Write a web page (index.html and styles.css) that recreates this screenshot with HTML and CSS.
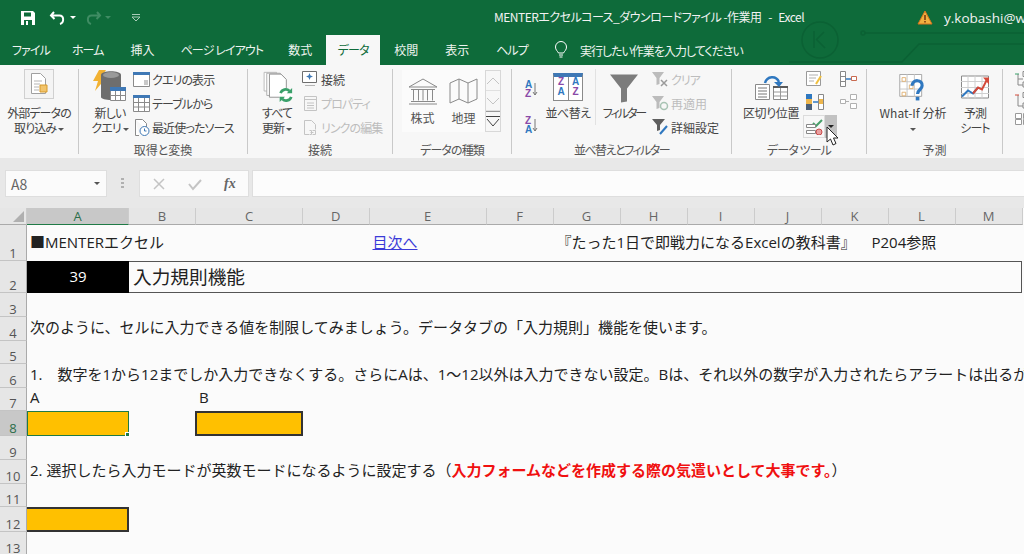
FILE: index.html
```html
<!DOCTYPE html>
<html lang="ja">
<head>
<meta charset="utf-8">
<title>MENTERエクセルコース</title>
<link rel="stylesheet" href="styles.css">
</head>
<body>
<div class="app">

  <header class="titlebar">
    <svg class="circuit" width="300" height="65" viewBox="0 0 300 65" fill="none" stroke="#0b6134" stroke-width="1.5">
      <circle cx="96" cy="40" r="18"/><path d="M90 31v17M92 40l8-8M93 40l8 8"/>
      <path d="M65 62h113l17-18h105M141 33h159"/><circle cx="139" cy="33" r="2"/>
    </svg>
    <div class="qat">
      <svg width="16" height="16" viewBox="0 0 16 16"><path fill="#fff" d="M1 1h12l2 2v12H1z"/><path fill="#0e6b3a" d="M4 2.500h7v4H4zM4 10h8v5H4z"/><path fill="#fff" d="M6 11h2v4H6z"/></svg>
      <svg class="undo" width="18" height="16" viewBox="0 0 18 16" fill="none" stroke="#fff" stroke-width="2"><path d="M5 2L2 5.500 5.500 9M2.500 5.500h8c4.500 0 5 7 .5 8.500"/></svg>
      <span class="caret white"></span>
      <svg class="redo" width="18" height="16" viewBox="0 0 18 16" fill="none" stroke="#3f8c63" stroke-width="2"><path d="M13 2l3 3.500L12.500 9M15.500 5.500h-8c-4.500 0-5 7-.5 8.500"/></svg>
      <span class="caret dim"></span>
      <svg class="customize" width="12" height="10" viewBox="0 0 12 10" fill="none" stroke="#a8cdb8"><path d="M2 1.500h8M2 4l4 4 4-4z"/></svg>
    </div>
    <div class="doc-title">MENTERエクセルコース_ダウンロードファイル -作業用 &nbsp; - &nbsp; Excel</div>
    <div class="account">
      <svg width="16" height="15" viewBox="0 0 16 15"><path fill="#f0b040" stroke="#d9731c" d="M8 1l7 13H1z"/><path fill="#7a3b10" d="M7.200 5h1.600v5H7.200zM7.200 11h1.600v1.600H7.200z"/></svg>
      <span>y.kobashi@wh</span>
    </div>
  </header>

  <nav class="tabs">
    <span class="tab kana tab-file">ファイル</span>
    <span class="tab kana tab-home">ホーム</span>
    <span class="tab tab-insert">挿入</span>
    <span class="tab kana tab-layout">ページ レイアウト</span>
    <span class="tab tab-formula">数式</span>
    <span class="tab kana tab-data active">データ</span>
    <span class="tab tab-review">校閲</span>
    <span class="tab tab-view">表示</span>
    <span class="tab kana tab-help">ヘルプ</span>
    <svg class="bulb" width="14" height="18" viewBox="0 0 14 18" fill="none" stroke="#fff"><path d="M4.500 12C3.500 10 1.500 9 1.500 6a5.500 5.500 0 0 1 11 0c0 3-2 4-3 6zM5 14h4M5.500 16h3"/></svg>
    <span class="tell-me">実行したい作業を入力してください</span>
  </nav>

  <section class="ribbon">

    <div class="group g-external">
      <div class="group-body">
        <div class="big">
          <div class="big-framed">
            <svg width="20" height="24" viewBox="0 0 20 24"><path fill="#fff" stroke="#a0a0a0" d="M2.500 1.500h9l5 5v15h-14z"/><path stroke="#b5b5b5" d="M5 9h8M5 12h6M5 15h5M5 18h5"/><path fill="#f2c46b" stroke="#d69a2d" d="M11 13h7v7h-7z"/></svg>
          </div>
          <span class="big-text">外部データの<br>取り込み <i class="caret"></i></span>
        </div>
      </div>
      <div class="group-label"></div>
    </div>

    <div class="group g-get">
      <div class="group-body">
        <div class="big">
          <svg class="big-icon" width="36" height="36" viewBox="0 0 36 36">
            <path fill="#f2b233" d="M7 1h7L9 9h5L3 22l3-10H1z"/>
            <path fill="#6e6e6e" d="M9 6c0-5 20-5 20 0v22c0 4-20 4-20 0z"/><ellipse cx="19" cy="6" rx="8" ry="3" fill="#9a9a9a"/>
            <path fill="#fff" stroke="#8a8a8a" d="M18.500 18.500h15v13h-15z"/><path fill="#3f78b5" d="M18 18h16v4H18z"/><path stroke="#8a8a8a" d="M23.500 22v9M28.500 22v9M19 26.500h14"/>
          </svg>
          <span class="big-text">新しい<br>クエリ <i class="caret"></i></span>
        </div>
        <div class="small-list">
          <div class="small-btn"><svg width="17" height="15" viewBox="0 0 17 15"><path fill="#fff" stroke="#8a8a8a" d="M.5.5h16v14H.500z"/><path fill="#3f78b5" d="M0 0h17v3H0z"/><path fill="#c8c8c8" d="M11 8h4v5h-4z"/></svg>クエリの表示</div>
          <div class="small-btn"><svg width="17" height="17" viewBox="0 0 17 17"><path fill="#fff" stroke="#8a8a8a" d="M.5.5h16v16H.500z"/><path fill="#3f78b5" d="M0 0h17v3H0z"/><path stroke="#8a8a8a" d="M5.500 3v14M11.500 3v14M0 7.500h17M0 12h17"/></svg>テーブルから</div>
          <div class="small-btn"><svg width="17" height="17" viewBox="0 0 17 17"><path fill="#fff" stroke="#8a8a8a" d="M2.500.5h7l4 4v6M6 16.500H2.500V.500"/><circle cx="11.500" cy="12" r="4.500" fill="#fff" stroke="#3f78b5"/><path stroke="#3f78b5" fill="none" d="M11.500 9.500V12h2"/></svg>最近使ったソース</div>
        </div>
      </div>
      <div class="group-label flat">取得と変換</div>
    </div>

    <div class="group g-conn">
      <div class="group-body">
        <div class="big">
          <svg class="big-icon" width="32" height="36" viewBox="0 0 36 36">
            <path fill="#fff" stroke="#b5b5b5" d="M3.500 1.500h14v21h-14z"/><path fill="#fff" stroke="#a5a5a5" d="M6.500 2.500h15l6 6v19h-21z"/><path fill="#fff" stroke="#8a8a8a" d="M9.500 3.500h13l6 6v20h-19z"/>
            <circle cx="28" cy="27" r="7.500" fill="#fff"/><path fill="none" stroke="#3aa06a" stroke-width="3" d="M22 25a6 6 0 0 1 10-2.500M34 29a6 6 0 0 1-10 2.500"/><path fill="#3aa06a" d="M29 25h6v-6zM27 29h-6v6z"/>
          </svg>
          <span class="big-text">すべて<br>更新 <i class="caret"></i></span>
        </div>
        <div class="small-list">
          <div class="small-btn flat"><svg width="17" height="16" viewBox="0 0 17 16"><path fill="#fff" stroke="#6e6e6e" d="M.5.5h14v11H.500z"/><path fill="#3f78b5" d="M7.500 2l1 2.500 2.500 1-2.500 1-1 2.500-1-2.500-2.500-1 2.500-1z"/><path stroke="#b5b5b5" d="M3 14.500h10"/></svg>接続</div>
          <div class="small-btn off"><svg width="17" height="17" viewBox="0 0 17 17" fill="none" stroke="#c4c4c4"><path d="M2.500 1.500h12v14h-12zM2.500 4.500h12M5 8h7M5 10.500h7M5 13h7"/></svg>プロパティ</div>
          <div class="small-btn off"><svg width="17" height="17" viewBox="0 0 17 17" fill="none" stroke="#c4c4c4"><path d="M7 15.500H2.500v-14h7l4 4v5M8.500 13.500h3M7.500 11.500h2v4h-2M10.500 11.500h3v4h-3"/></svg>リンクの編集</div>
        </div>
      </div>
      <div class="group-label flat">接続</div>
    </div>

    <div class="group g-types">
      <div class="group-body">
        <div class="gallery">
          <div class="gallery-item">
            <svg width="30" height="27" viewBox="0 0 30 27" fill="none" stroke="#8a8a8a"><path d="M1 9L15 1l14 8zM3 11.500h24M5.500 11.500v11M10.500 11.500v11M15 11.500v11M19.500 11.500v11M24.500 11.500v11M3 23.500h24M1 26h28"/></svg>
            <span>株式</span>
          </div>
          <div class="gallery-item">
            <svg width="30" height="27" viewBox="0 0 30 27" fill="none" stroke="#8a8a8a"><path d="M1 5l9-4 9 4 9-4v20l-9 4-9-4-9 4zM10 1v20M19 5v20"/></svg>
            <span>地理</span>
          </div>
        </div>
        <div class="gallery-scroll">
          <span class="scroll-btn"><svg width="14" height="8" viewBox="0 0 14 8" fill="none" stroke="#c4c4c4"><path d="M1 7l6-6 6 6"/></svg></span>
          <span class="scroll-btn"><svg width="14" height="8" viewBox="0 0 14 8" fill="none" stroke="#c4c4c4"><path d="M1 1l6 6 6-6"/></svg></span>
          <span class="scroll-btn more"><svg width="14" height="11" viewBox="0 0 14 11" fill="none" stroke="#444"><path d="M0 .500h14M1 3l6 7 6-7"/></svg></span>
        </div>
      </div>
      <div class="group-label">データの種類</div>
    </div>

    <div class="group g-sort">
      <div class="group-body">
        <div class="sort-col">
          <div class="sort-btn"><span class="az"><b class="blue">A</b><b class="purple">Z</b></span><svg width="6" height="14" viewBox="0 0 6 14" fill="none" stroke="#777"><path d="M3 1v12M1 10l2 3 2-3"/></svg></div>
          <div class="sort-btn"><span class="az"><b class="purple">Z</b><b class="blue">A</b></span><svg width="6" height="14" viewBox="0 0 6 14" fill="none" stroke="#777"><path d="M3 1v12M1 10l2 3 2-3"/></svg></div>
        </div>
        <div class="big b-sort">
          <div class="sort-card">
            <span class="az-cell"><b class="purple">Z</b><b class="blue">A</b></span>
            <span class="az-cell"><b class="blue">A</b><b class="purple">Z</b></span>
          </div>
          <span class="big-text">並べ替え</span>
        </div>
        <div class="big b-filter">
          <svg class="big-icon" width="30" height="30" viewBox="0 0 30 30"><path fill="#7c7c7c" d="M1 1h28L18 15v13l-6 1V15z"/></svg>
          <span class="big-text">フィルター</span>
        </div>
        <div class="small-list">
          <div class="small-btn off"><svg width="17" height="16" viewBox="0 0 17 16"><path fill="#bcbcbc" d="M0 1h12L7.500 7v6l-3 1V7z"/><path stroke="#9a9a9a" stroke-width="1.500" d="M9 9l6 6M15 9l-6 6"/></svg>クリア</div>
          <div class="small-btn off flat"><svg width="17" height="16" viewBox="0 0 17 16"><path fill="#bcbcbc" d="M0 1h12L7.500 7v6l-3 1V7z"/><circle cx="12" cy="11" r="3.500" fill="none" stroke="#a8c4b4" stroke-width="1.500"/></svg>再適用</div>
          <div class="small-btn flat"><svg width="17" height="18" viewBox="0 0 17 18"><path fill="#5e5e5e" d="M0 1h13L8 7v5l-3 1V7z"/><path stroke="#2f78c0" stroke-width="2" d="M8 16l7-8"/></svg>詳細設定</div>
        </div>
      </div>
      <div class="group-label tight">並べ替えとフィルター</div>
    </div>

    <div class="group g-tools">
      <div class="group-body">
        <div class="big b-split">
          <svg class="big-icon" width="34" height="30" viewBox="0 0 34 30">
            <path fill="#fff" stroke="#8a8a8a" d="M1.500 10.500h14v15h-14z"/><path stroke="#777" d="M4 14h9M4 17h9M4 20h9M4 23h9"/>
            <path fill="#fff" stroke="#8a8a8a" d="M19.500 12.500h14v13h-14z"/><path fill="#5a5a5a" d="M19 12h15v2H19z"/><path stroke="#999" d="M26.500 14v11M20 18h13M20 22h13"/>
            <path fill="none" stroke="#2f78c0" stroke-width="2.500" d="M11 9c2-7 11-8 14-1"/><path fill="#2f78c0" d="M20 8h9l-4 5z"/>
          </svg>
          <span class="big-text">区切り位置</span>
        </div>
        <div class="tool-col">
          <svg width="17" height="16" viewBox="0 0 17 16"><path fill="#fff" stroke="#9a9a9a" d="M.5.5h14v14H.500z"/><path stroke="#b0b0b0" d="M3 4h9M3 7h7M3 10h5"/><path stroke="#f0c040" stroke-width="2" d="M10 13l5-8"/></svg>
          <svg width="18" height="16" viewBox="0 0 18 16"><path fill="#2f78c0" d="M0 0h6v5H0z"/><path fill="#eeb64c" d="M0 5h6v5H0z"/><path fill="#4a5f78" d="M0 10h6v6H0z"/><path fill="#fff" stroke="#888" d="M12.500.5h5v15h-5z"/><path fill="#eeb64c" d="M13 5h4v5h-4z"/><path stroke="#2f78c0" stroke-width="1.500" d="M7 8h5"/></svg>
          <div class="validation">
            <span class="validation-main"><svg width="18" height="16" viewBox="0 0 18 16"><path fill="none" stroke="#48a06a" stroke-width="2" d="M8 4l3 3 6-6"/><path fill="#fff" stroke="#888" d="M1.500 5.500h9v3h-9zM1.500 11.500h9v3h-9z"/><circle cx="14" cy="13" r="3" fill="#e8a0a0" stroke="#c84a4a"/></svg></span>
            <span class="validation-drop"><i class="caret"></i></span>
          </div>
        </div>
        <div class="tool-col">
          <svg width="17" height="16" viewBox="0 0 17 16"><path fill="#fff" stroke="#888" d="M.5.5h5v15h-5z"/><path stroke="#888" d="M0 5.500h6M0 10.500h6"/><path stroke="#2f78c0" stroke-width="1.500" d="M6 8h5"/><path fill="#fff" stroke="#c86a50" d="M11.500 5.500h5v4h-5z"/></svg>
          <svg width="17" height="16" viewBox="0 0 17 16" fill="#fff" stroke="#b0b0b0"><path d="M.5 5.500h5v4h-5zM10.500.5h6v5h-6zM10.500 9.500h6v5h-6zM6 7.500h3"/></svg>
        </div>
      </div>
      <div class="group-label">データ ツール</div>
    </div>

    <div class="group g-forecast">
      <div class="group-body">
        <div class="big b-whatif">
          <svg class="big-icon" width="30" height="34" viewBox="0 0 30 34">
            <path fill="#fff" stroke="#a0a0a0" d="M.5.5h24v24H.500z"/><path stroke="#c4c4c4" d="M8.500 0v25M16.500 0v25M0 8.500h25M0 16.500h25"/>
            <path fill="none" stroke="#e0b070" d="M3 4h4v4H3zM11 12h4v4h-4zM3 20h4v4H3z"/>
            <path fill="none" stroke="#2f78c0" stroke-width="3.500" d="M14 13c0-8 12-7 11 0 0 4-5 4-5 9"/><path fill="#2f78c0" d="M18 25h4v4h-4z"/>
          </svg>
          <span class="big-text flat">What-If 分析<br><i class="caret"></i></span>
        </div>
        <div class="big b-forecast">
          <svg class="big-icon" width="28" height="27" viewBox="0 0 28 27">
            <path fill="#fff" stroke="#8a8a8a" d="M.5.5h27v22H.500z"/><path stroke="#d0d0d0" d="M7 0v23M14 0v23M21 0v23M0 6h28M0 12h28M0 18h28"/>
            <path fill="none" stroke="#2f78c0" stroke-width="2" d="M1 21l6-6 5 3 5-6"/><path fill="none" stroke="#d44a3a" stroke-width="2" d="M12 18l5-6 4 2 5-10"/><path fill="#d44a3a" d="M22 2h6v7z"/>
          </svg>
          <span class="big-text">予測<br>シート</span>
        </div>
      </div>
      <div class="group-label flat">予測</div>
    </div>

    <div class="group g-outline">
      <div class="tool-col">
        <svg width="17" height="17" viewBox="0 0 17 17" fill="none" stroke="#888"><path d="M3 3v11h5M3 8h5M8 .5h6v5H8zM8 11h6v5H8z"/><path stroke="#3aa06a" d="M0 3h4"/></svg>
        <svg width="17" height="17" viewBox="0 0 17 17" fill="none" stroke="#888"><path d="M3 3v11h5M8 .5h6v5H8zM8 11h6v5H8z"/><path stroke="#d44a3a" d="M0 3h4"/></svg>
        <svg width="17" height="17" viewBox="0 0 17 17" fill="#fff" stroke="#999"><path d="M.5.5h6v5h-6zM8.500.5h6v5h-6zM.5 6.500h6v5h-6zM8.500 6.500h6v5h-6z"/></svg>
      </div>
    </div>

    <svg class="cursor" width="14" height="22" viewBox="0 0 14 22"><path fill="#fff" stroke="#222" d="M1 1v15l3.500-3 2.500 6 3-1.500-2.500-5.500H12z"/></svg>
  </section>

  <div class="formula-bar">
    <div class="name-box">A8<i class="caret"></i></div>
    <span class="grip"></span>
    <div class="fx-box">
      <svg width="14" height="14" viewBox="0 0 14 14" fill="none" stroke="#c4c4c4" stroke-width="1.500"><path d="M2 2l10 10M12 2L2 12"/></svg>
      <svg width="14" height="14" viewBox="0 0 14 14" fill="none" stroke="#c4c4c4" stroke-width="2"><path d="M1 7l4 5 8-9"/></svg>
      <span class="fx">fx</span>
    </div>
    <div class="formula-input"></div>
  </div>

  <main class="sheet">
    <div class="corner"><span class="corner-mark"></span></div>
    <div class="col-head on">A</div><div class="col-head">B</div><div class="col-head">C</div><div class="col-head">D</div><div class="col-head">E</div><div class="col-head">F</div><div class="col-head">G</div><div class="col-head">H</div><div class="col-head">I</div><div class="col-head">J</div><div class="col-head">K</div><div class="col-head">L</div><div class="col-head">M</div>

    <div class="row-head r1">1</div><div class="row-head r2">2</div><div class="row-head r3">3</div><div class="row-head r4">4</div><div class="row-head r5">5</div><div class="row-head r6">6</div><div class="row-head r7">7</div><div class="row-head on r8">8</div><div class="row-head r9">9</div><div class="row-head r10">10</div><div class="row-head r11">11</div><div class="row-head r12">12</div><div class="row-head r13">13</div>

    <div class="cell r1 ca">■MENTERエクセル</div>
    <div class="cell r1 ce"><a class="link">目次へ</a></div>
    <div class="cell r1 cg">『たった1日で即戦力になるExcelの教科書』</div>
    <div class="cell r1 ck">P204参照</div>

    <div class="cell r2 ca num-cell">39</div>
    <div class="cell r2 title-cell">入力規則機能</div>

    <div class="cell r4 ca">次のように、セルに入力できる値を制限してみましょう。データタブの「入力規則」機能を使います。</div>
    <div class="cell r6 ca">1.　数字を1から12までしか入力できなくする。さらにAは、1～12以外は入力できない設定。Bは、それ以外の数字が入力されたらアラートは出るが</div>
    <div class="cell r7 ca">A</div>
    <div class="cell r7 cc">B</div>
    <div class="cell r8 ca fill selected"><span class="fill-handle"></span></div>
    <div class="cell r8 cc fill"></div>
    <div class="cell r10 ca">2. 選択したら入力モードが英数モードになるように設定する（<strong class="warn">入力フォームなどを作成する際の気遣いとして大事です。</strong>）</div>
    <div class="cell r12 ca fill no-left"></div>
  </main>
</div>
</body>
</html>
```

FILE: styles.css
```css
* {
    box-sizing: border-box;
}

html, body {
    margin: 0;
    padding: 0;
    overflow: hidden;
}

body {
    font-family: "Noto Sans CJK JP", "Noto Sans", sans-serif;
    color: #333;
}

.app {
    width: 1024px;
    height: 554px;
    overflow: hidden;
    background: #e8e8e8;
}

/* title bar */
.titlebar {
    position: relative;
    z-index: 1;
    height: 35px;
    background: #0e6b3a;
    color: #f2f2f2;
    display: flex;
    align-items: center;
    font-size: 12px;
    font-feature-settings: "palt";
}

.circuit {
    position: absolute;
    left: 724px;
    top: 0;
}

.qat {
    display: flex;
    align-items: center;
    flex: none;
    width: 494px;
    padding-left: 20px;
}

.qat .undo { margin-left: 13px; }
.qat .caret { margin-left: 3px; }
.qat .redo { margin-left: 8px; }
.qat .customize { margin-left: 19px; }

.doc-title {
    position: relative;
    top: -1px;
    flex: none;
    width: 423px;
    white-space: nowrap;
    letter-spacing: -.5px;
}

.account {
    position: relative;
    display: flex;
    align-items: center;
    flex: none;
    gap: 11px;
    white-space: nowrap;
    font-size: 13.500px;
    font-family: "Open Sans", sans-serif;
}

.caret {
    display: inline-block;
    width: 0;
    height: 0;
    border-left: 3px solid transparent;
    border-right: 3px solid transparent;
    border-top: 3px solid #555;
    vertical-align: middle;
}

.caret.white { border-top-color: #fff; }
.caret.dim { border-top-color: #3f8c63; }

/* tabs */
.tabs {
    position: relative;
    height: 30px;
    background: #0e6b3a;
    color: #eef4f0;
    font-size: 12px;
    font-feature-settings: "palt";
    display: flex;
    align-items: center;
}

.tab {
    white-space: nowrap;
    height: 30px;
    line-height: 30px;
}

.tab.kana { letter-spacing: -.9px; }

.tab-file { margin-left: 12px; }
.tab-home { margin-left: 22px; }
.tab-insert { margin-left: 27px; }
.tab-layout { margin-left: 26px; }
.tab-formula { margin-left: 25px; }
.tab-data { margin-left: 14px; }
.tab-review { margin-left: 14px; }
.tab-view { margin-left: 27px; }
.tab-help { margin-left: 27px; }

.tab.active {
    background: #f7f7f7;
    color: #0e6b3a;
    width: 54px;
    text-align: center;
}

.bulb { margin-left: 26px; flex: none; }

.tell-me {
    margin-left: 12px;
    letter-spacing: -1px;
    white-space: nowrap;
}

/* ribbon */
.ribbon {
    position: relative;
    height: 93px;
    background: #f7f7f7;
    display: flex;
    padding-top: 4px;
    font-size: 12px;
    font-feature-settings: "palt";
    letter-spacing: -.9px;
    color: #444;
    overflow: hidden;
}

.flat { letter-spacing: 0; }
.tight { letter-spacing: -1.500px; }

.group {
    position: relative;
    height: 85px;
    flex: none;
    border-right: 1px solid #c9c9c9;
}

.group-body {
    height: 74px;
    display: flex;
}

.group-label {
    text-align: center;
    line-height: 14px;
    white-space: nowrap;
    color: #555;
}

.g-external { width: 79px; }
.g-get { width: 169px; }
.g-conn { width: 145px; }
.g-types { width: 119px; }
.g-sort { width: 220px; }
.g-tools { width: 135px; }
.g-forecast { width: 136px; }
.g-outline { width: 30px; border-right: 0; padding-left: 12px; }

.big {
    display: flex;
    flex-direction: column;
    align-items: center;
    flex: none;
}

.big-icon { height: 36px; flex: none; }

.big-text {
    line-height: 15px;
    text-align: center;
    white-space: nowrap;
}

.big-framed {
    width: 30px;
    height: 30px;
    margin: 0 0 6px;
    background: #f4f4f4;
    border: 1px solid #d0d0d0;
    display: flex;
    align-items: center;
    justify-content: center;
}

.g-external .big { width: 78px; }
.g-get .big { width: 50px; margin-left: 6px; }
.g-conn .big { width: 50px; margin-left: 4px; }

.small-list {
    margin-top: -2px;
    flex: none;
}

.g-get .small-list { margin-left: -2px; }

.small-btn {
    height: 24px;
    display: flex;
    align-items: center;
    gap: 2px;
    white-space: nowrap;
}

.small-btn svg { flex: none; }
.small-btn.off { color: #bdbdbd; }

/* data types gallery */
.gallery {
    margin: 1px 0 0 9px;
    width: 83px;
    height: 62px;
    background: #fbfbfb;
    display: flex;
}

.gallery-item {
    width: 41px;
    display: flex;
    flex-direction: column;
    align-items: center;
    padding-top: 8px;
    gap: 5px;
    letter-spacing: 0;
    color: #555;
}

.gallery-item span { line-height: 15px; }

.gallery-scroll {
    margin-top: 1px;
    width: 16px;
    height: 62px;
    display: flex;
    flex-direction: column;
    border: 1px solid #d8d8d8;
}

.scroll-btn {
    height: 20px;
    display: flex;
    align-items: center;
    justify-content: center;
    border-bottom: 1px solid #e0e0e0;
}

.scroll-btn.more {
    border-top: 1px solid #999;
    border-bottom: 0;
}

/* sort and filter */
.sort-col {
    width: 29px;
    padding-left: 13px;
    flex: none;
}

.sort-btn {
    height: 36px;
    display: flex;
    align-items: center;
    gap: 1px;
    padding-top: 4px;
}

.az {
    display: flex;
    flex-direction: column;
    line-height: 9px;
    font-size: 10px;
    font-family: "Liberation Sans", sans-serif;
}

.az b, .az-cell b { font-weight: 700; }
.blue { color: #2f78c0; }
.purple { color: #8a4aa8; }

.b-sort {
    width: 55px;
    padding-top: 4px;
    border-right: 1px solid #e2e2e2;
    height: 56px;
    letter-spacing: -.5px;
}

.sort-card {
    width: 30px;
    height: 28px;
    margin-bottom: 4px;
    border: 1px solid #8a8a8a;
    border-top: 4px solid #3f78b5;
    background: #fff;
    display: flex;
}

.az-cell {
    flex: 1;
    display: flex;
    flex-direction: column;
    align-items: center;
    line-height: 10px;
    font-size: 10px;
    font-family: "Liberation Sans", sans-serif;
}

.az-cell + .az-cell { border-left: 1px solid #8a8a8a; }

.b-filter {
    width: 56px;
    padding-top: 3px;
    letter-spacing: -2px;
}

.b-filter .big-icon { height: 33px; }

/* data tools */
.b-split {
    width: 68px;
    margin-left: 5px;
    padding-top: 4px;
    letter-spacing: -.4px;
}

.b-split .big-icon { height: 32px; }

.tool-col {
    display: flex;
    flex-direction: column;
    align-items: flex-start;
    gap: 7px;
    padding: 2px 0 0 1px;
    width: 34px;
    flex: none;
}

.g-outline .tool-col { padding-left: 0; gap: 4px; }

.validation {
    margin: -2px 0 0 -3px;
    display: flex;
    height: 23px;
}

.validation-main {
    width: 22px;
    border: 1px solid #dcdcdc;
    display: flex;
    align-items: center;
    justify-content: center;
}

.validation-drop {
    width: 12px;
    background: #c2c2c2;
    display: flex;
    align-items: center;
    justify-content: center;
}

.validation-drop .caret { border-top-color: #222; }

/* forecast */
.b-whatif {
    width: 88px;
    margin-left: 2px;
    padding-top: 5px;
}

.b-whatif .big-icon { height: 31px; }
.b-forecast { width: 36px; padding-top: 4px; }
.b-forecast .big-icon { height: 32px; }

.cursor {
    position: absolute;
    left: 826px;
    top: 61px;
}

/* formula bar */
.formula-bar {
    height: 39px;
    padding-top: 12px;
    display: flex;
    background: #e8e8e8;
}

.name-box {
    margin-left: 5px;
    width: 102px;
    height: 27px;
    background: #fbfbfb;
    border: 1px solid #dedede;
    padding: 0 6px 0 5px;
    display: flex;
    align-items: center;
    justify-content: space-between;
    font-size: 14px;
    color: #666;
}

.grip {
    width: 3px;
    margin: 8px 15px 8px 14px;
    background: repeating-linear-gradient(#b0b0b0 0 2px, transparent 2px 4px);
}

.fx-box {
    width: 110px;
    height: 27px;
    background: #fbfbfb;
    border: 1px solid #dedede;
    display: flex;
    align-items: center;
    gap: 22px;
    padding-left: 12px;
}

.fx {
    font-family: "Liberation Serif", serif;
    font-style: italic;
    font-weight: 700;
    font-size: 14px;
    color: #666;
}

.formula-input {
    flex: 1;
    margin-left: 3px;
    height: 27px;
    background: #fcfcfc;
    border: 1px solid #dedede;
    border-right: 0;
}

/* sheet */
.sheet {
    margin-top: 11px;
    display: grid;
    grid-template-columns: 27px 102px 67px 107px 66.500px 117px 67px 67px 67px 67px 67px 67px 67px 67px;
    grid-template-rows: 17px 36px 32px 24px 24px 23px 24px 23px 25px 24px 24px 23px 25px 24px;
    height: 346px;
    width: 1024px;
    background: #fbfbfb;
    font-family: "Open Sans", "Noto Sans CJK JP", sans-serif;
    font-size: 15px;
    color: #222;
    overflow: hidden;
}

.corner {
    background: #e6e6e6;
    border-bottom: 1px solid #aaa;
    border-right: 1px solid #ccc;
    position: relative;
}

.corner-mark {
    position: absolute;
    right: 2px;
    bottom: 2px;
    width: 0;
    height: 0;
    border-left: 11px solid transparent;
    border-bottom: 11px solid #b0b0b0;
}

.col-head {
    background: #e6e6e6;
    border-bottom: 1px solid #aaa;
    border-right: 1px solid #ccc;
    text-align: center;
    font-size: 13px;
    line-height: 17px;
    color: #666;
}

.col-head.on {
    background: #c8c8c8;
    color: #2c6e4a;
    border-bottom: 1px solid #1f7a46;
}

.row-head {
    grid-column: 1;
    background: #e6e6e6;
    border-bottom: 1px solid #c4c4c4;
    border-right: 1px solid #aaa;
    font-size: 13px;
    line-height: 14px;
    text-align: center;
    display: flex;
    align-items: flex-end;
    justify-content: center;
    color: #555;
}

.row-head.on {
    background: #c8c8c8;
    color: #2c6e4a;
}

.r1 { grid-row: 2; }
.r2 { grid-row: 3; }
.r3 { grid-row: 4; }
.r4 { grid-row: 5; }
.r5 { grid-row: 6; }
.r6 { grid-row: 7; }
.r7 { grid-row: 8; }
.r8 { grid-row: 9; }
.r9 { grid-row: 10; }
.r10 { grid-row: 11; }
.r11 { grid-row: 12; }
.r12 { grid-row: 13; }
.r13 { grid-row: 14; }

.ca { grid-column: 2; }
.cc { grid-column: 4; }
.ce { grid-column: 6; }
.cg { grid-column: 8; }
.ck { grid-column: 12; }

.cell {
    white-space: nowrap;
    padding-left: 3px;
    padding-bottom: 3px;
    line-height: 22px;
    align-self: end;
}

.cell.r1 {
    align-self: center;
    padding-bottom: 3px;
}

.cell.ck { padding-left: 50px; }

.link {
    color: #3b3bd8;
    text-decoration: underline;
}

.num-cell {
    align-self: stretch;
    background: #000;
    color: #fff;
    text-align: center;
    line-height: 31px;
    padding: 0;
}

.title-cell {
    grid-column: 3 / 15;
    align-self: stretch;
    font-size: 18.670px;
    line-height: 29px;
    border: 1px solid #555;
    border-left: 0;
    margin-right: 1px;
    padding: 0 0 0 4px;
}

.warn {
    color: #f01010;
    font-weight: 700;
}

.fill {
    align-self: stretch;
    background: #ffc000;
    border: 2px solid #333;
    padding: 0;
    position: relative;
}

.cc.fill { margin-left: -1px; }

.no-left { border-left: 0; }

.selected {
    border: 1px solid #1f7a46;
    box-shadow: inset 0 0 0 1px #ffc000;
}

.fill-handle {
    position: absolute;
    right: -2px;
    bottom: -2px;
    width: 5px;
    height: 5px;
    background: #1f7a46;
    border: 1px solid #fff;
}
```
